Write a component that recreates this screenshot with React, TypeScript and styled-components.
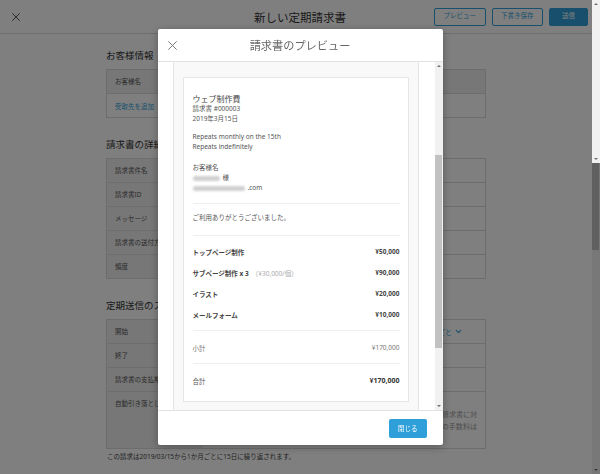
import React from "react";
import styled, { createGlobalStyle } from "styled-components";
import { ChevronDown } from "lucide-react";

const GlobalStyle = createGlobalStyle`
  html, body {
    margin: 0;
    padding: 0;
    height: 100%;
    overflow: hidden;
  }
  body {
    font-family: "Noto Sans", "Noto Sans CJK JP", sans-serif;
    color: #333;
    background: #fff;
  }
  #root {
    height: 100%;
  }
`;

const items = [
  { name: "トップページ制作", note: "", amount: "¥50,000" },
  { name: "サブページ制作 x 3", note: "（¥30,000/個）", amount: "¥90,000" },
  { name: "イラスト", note: "", amount: "¥20,000" },
  { name: "メールフォーム", note: "", amount: "¥10,000" },
];

const CrossIcon = ({ size, color }: { size: number; color: string }) => (
  <svg width={size} height={size} viewBox="0 0 10 10" fill="none">
    <path
      d="M0.7 0.7 9.3 9.3 M9.3 0.7 0.7 9.3"
      stroke={color}
      strokeWidth={1.1}
      strokeLinecap="round"
    />
  </svg>
);

const App = () => {
  return (
    <>
      <GlobalStyle />
      <Page>
        <Main>
          <Header>
            <CrossIcon size={8} color="#444" />
            <PageTitle>新しい定期請求書</PageTitle>
            <HeaderActions>
              <HeaderButton>プレビュー</HeaderButton>
              <HeaderButton>下書き保存</HeaderButton>
              <HeaderButton $primary>送信</HeaderButton>
            </HeaderActions>
          </Header>

          <Content>
            <Section>
              <SectionTitle>お客様情報</SectionTitle>
              <Table>
                <Row $full>
                  <LabelCell>お客様名</LabelCell>
                </Row>
                <Row $full>
                  <LinkCell>受取先を追加</LinkCell>
                </Row>
              </Table>
            </Section>

            <Section>
              <SectionTitle>請求書の詳細</SectionTitle>
              <Table>
                <Row>
                  <LabelCell>請求書件名</LabelCell>
                  <ValueCell />
                </Row>
                <Row>
                  <LabelCell>請求書ID</LabelCell>
                  <ValueCell />
                </Row>
                <Row>
                  <LabelCell>メッセージ</LabelCell>
                  <ValueCell />
                </Row>
                <Row>
                  <LabelCell>請求書の送付方法</LabelCell>
                  <ValueCell />
                </Row>
                <Row>
                  <LabelCell>頻度</LabelCell>
                  <ValueCell />
                </Row>
              </Table>
            </Section>

            <Section>
              <SectionTitle>定期送信のスケジュール</SectionTitle>
              <Table>
                <Row>
                  <LabelCell>開始</LabelCell>
                  <ValueCell $spread>
                    <span />
                    <SelectLink>
                      1か月ごと
                      <ChevronDown size={9} strokeWidth={3} />
                    </SelectLink>
                  </ValueCell>
                </Row>
                <Row>
                  <LabelCell>終了</LabelCell>
                  <ValueCell />
                </Row>
                <Row>
                  <LabelCell>請求書の支払期限</LabelCell>
                  <ValueCell />
                </Row>
                <Row $tall>
                  <LabelCell $top>自動引き落とし設定</LabelCell>
                  <DebitValue>
                    <JustifiedLine>
                      自動引き落としを有効にすると、お客様の登録済み口座から毎月この定期請求書に対
                    </JustifiedLine>
                    <JustifiedLine>
                      して自動的に決済が行われます。なお、決済ごとに発生する各カード決済の手数料は
                    </JustifiedLine>
                  </DebitValue>
                </Row>
              </Table>
              <Note>
                この請求は2019/03/15から1か月ごとに15日に繰り返されます。
              </Note>
            </Section>
          </Content>
        </Main>

        <Scrollbar>
          <ScrollArrow $dir="up" />
          <Thumb $offset={92} $length={150} />
          <ScrollArrow $dir="down" />
        </Scrollbar>
      </Page>

      <Overlay>
        <OverlayScrollbar>
          <ScrollArrow $dir="up" />
          <ScrollArrow $dir="down" />
        </OverlayScrollbar>

        <Modal>
          <ModalHeader>
            <CrossIcon size={9} color="#777" />
            <ModalTitle>請求書のプレビュー</ModalTitle>
            <span />
          </ModalHeader>

          <ModalBody>
            <ScrollArea>
              <Sheet>
                <InvoiceCard>
                  <CardBlock>
                    <InvoiceTitle>ウェブ制作費</InvoiceTitle>
                    <TextLine>請求書 #000003</TextLine>
                    <TextLine>2019年3月15日</TextLine>

                    <Group $gap={8}>
                      <TextLine>Repeats monthly on the 15th</TextLine>
                      <TextLine>Repeats indefinitely</TextLine>
                    </Group>

                    <Group $gap={11}>
                      <TextLine>お客様名</TextLine>
                      <TextLine>
                        <Redacted $w={27} />様
                      </TextLine>
                      <TextLine>
                        <Redacted $w={52} />.com
                      </TextLine>
                    </Group>
                  </CardBlock>

                  <MessageBlock>ご利用ありがとうございました。</MessageBlock>

                  <LinesBlock>
                    {items.map((item) => (
                      <ItemRow key={item.name}>
                        <ItemName>
                          {item.name}
                          {item.note && <ItemNote>{item.note}</ItemNote>}
                        </ItemName>
                        <Amount>{item.amount}</Amount>
                      </ItemRow>
                    ))}
                  </LinesBlock>

                  <LinesBlock $top={6}>
                    <ItemRow $muted>
                      <span>小計</span>
                      <span>¥170,000</span>
                    </ItemRow>
                  </LinesBlock>

                  <LinesBlock $top={6} $bottom={10}>
                    <ItemRow>
                      <span>合計</span>
                      <TotalAmount>¥170,000</TotalAmount>
                    </ItemRow>
                  </LinesBlock>
                </InvoiceCard>
              </Sheet>
            </ScrollArea>

            <Scrollbar>
              <ScrollArrow $dir="up" />
              <Thumb $offset={85} $length={193} />
              <ScrollArrow $dir="down" />
            </Scrollbar>
          </ModalBody>

          <ModalFooter>
            <CloseButton>閉じる</CloseButton>
          </ModalFooter>
        </Modal>
      </Overlay>
    </>
  );
};

/* page underneath */

const Page = styled.div`
  display: flex;
  height: 100vh;
`;

const Main = styled.div`
  flex: 1;
  min-width: 0;
  display: flex;
  flex-direction: column;
`;

const Header = styled.header`
  height: 34px;
  box-sizing: border-box;
  flex: none;
  display: grid;
  grid-template-columns: 1fr auto 1fr;
  align-items: center;
  padding: 0 4px 0 12px;
  border-bottom: 1px solid #dcdcdc;
`;

const PageTitle = styled.h1`
  margin: 0;
  font-size: 11.5px;
  font-weight: 400;
  color: #333;
`;

const HeaderActions = styled.div`
  justify-self: end;
  display: flex;
  gap: 6px;
`;

const HeaderButton = styled.button<{ $primary?: boolean }>`
  height: 18px;
  padding: 0 ${(p) => (p.$primary ? "12px" : "8.5px")};
  border: 1px solid #2e9fd9;
  border-radius: 2px;
  background: ${(p) => (p.$primary ? "#2e9fd9" : "#fff")};
  color: ${(p) => (p.$primary ? "#fff" : "#2e9fd9")};
  font-family: inherit;
  font-size: 6.5px;
  line-height: 1;
`;

const Content = styled.main`
  width: 380px;
  margin: 0 auto;
  padding-top: 15px;
`;

const Section = styled.section`
  & + & {
    margin-top: 20px;
  }
`;

const SectionTitle = styled.h2`
  margin: 0 0 6px;
  font-size: 9.5px;
  line-height: 14px;
  font-weight: 400;
  color: #333;
`;

const Table = styled.div`
  border: 1px solid #dadada;
  background: #fff;
`;

const Row = styled.div<{ $full?: boolean; $tall?: boolean }>`
  display: grid;
  grid-template-columns: ${(p) => (p.$full ? "1fr" : "95px 1fr")};
  min-height: ${(p) => (p.$tall ? "56px" : "23px")};

  & + & {
    border-top: 1px solid #dadada;
  }
`;

const LabelCell = styled.div<{ $top?: boolean }>`
  display: flex;
  align-items: ${(p) => (p.$top ? "flex-start" : "center")};
  padding: ${(p) => (p.$top ? "7px 8px 0" : "0 8px")};
  background: #eee;
  font-size: 6.5px;
  line-height: 10px;
  color: #555;
  white-space: nowrap;
  overflow: hidden;
`;

const LinkCell = styled.div`
  display: flex;
  align-items: center;
  padding: 0 8px;
  font-size: 6.5px;
  color: #2e9fd9;
`;

const ValueCell = styled.div<{ $spread?: boolean }>`
  display: flex;
  align-items: center;
  justify-content: ${(p) => (p.$spread ? "space-between" : "flex-start")};
  padding: ${(p) => (p.$spread ? "0 22px 0 8px" : "0 8px")};
  font-size: 6.5px;
  color: #555;
`;

const SelectLink = styled.span`
  display: flex;
  align-items: center;
  gap: 2px;
  font-size: 7px;
  color: #2e9fd9;
`;

const DebitValue = styled.div`
  padding: 17px 8px 5px;
  font-size: 7px;
  line-height: 12px;
  color: #999;
  overflow: hidden;
`;

const JustifiedLine = styled.div`
  text-align: justify;
  text-align-last: justify;
  white-space: nowrap;
`;

const Note = styled.p`
  margin: 3px 0 0 1px;
  font-size: 6.5px;
  line-height: 10px;
  color: #444;
`;

/* scrollbars */

const Scrollbar = styled.div`
  flex: none;
  width: 8px;
  display: flex;
  flex-direction: column;
  background: #f1f1f1;
`;

const OverlayScrollbar = styled(Scrollbar)`
  position: absolute;
  top: 0;
  right: 0;
  height: 163px;
  justify-content: space-between;
`;

const ScrollArrow = styled.div<{ $dir: "up" | "down" }>`
  flex: none;
  height: 8px;
  display: flex;
  align-items: center;
  justify-content: center;
  margin-top: ${(p) => (p.$dir === "down" ? "auto" : "0")};

  &::before {
    content: "";
    border-left: 2px solid transparent;
    border-right: 2px solid transparent;
    ${(p) =>
      p.$dir === "up"
        ? "border-bottom: 2.5px solid #6e6e6e;"
        : "border-top: 2.5px solid #6e6e6e;"}
  }
`;

const Thumb = styled.div<{ $offset: number; $length: number }>`
  flex: none;
  margin: ${(p) => p.$offset}px 1px 0 0;
  height: ${(p) => p.$length}px;
  background: #c1c1c1;
`;

/* modal */

const Overlay = styled.div`
  position: fixed;
  inset: 0;
  display: flex;
  align-items: center;
  justify-content: center;
  background: rgba(0, 0, 0, 0.5);
`;

const Modal = styled.div`
  width: 285px;
  height: 416px;
  display: flex;
  flex-direction: column;
  background: #fff;
  border-radius: 2px;
  box-shadow: 0 2px 8px rgba(0, 0, 0, 0.3);
  overflow: hidden;
`;

const ModalHeader = styled.div`
  flex: none;
  height: 33px;
  box-sizing: border-box;
  display: grid;
  grid-template-columns: 1fr auto 1fr;
  align-items: center;
  padding: 0 10px;
  border-bottom: 1px solid #e2e2e2;
`;

const ModalTitle = styled.h2`
  margin: 0;
  font-size: 11.2px;
  font-weight: 400;
  color: #666;
`;

const ModalBody = styled.div`
  flex: 1;
  min-height: 0;
  display: flex;
`;

const ScrollArea = styled.div`
  flex: 1;
  overflow: hidden;
  padding: 0 16px 0 15px;
`;

const Sheet = styled.div`
  margin-top: -10px;
  padding: 24px 9px 20px;
  border: 1px solid #e4e4e4;
  background: #f9f9f9;
`;

const InvoiceCard = styled.div`
  padding: 16px 8px 0 9px;
  border: 1px solid #e6e6e6;
  background: #fff;
  color: #555;
`;

const CardBlock = styled.div`
  padding-bottom: 10px;
`;

const InvoiceTitle = styled.div`
  font-size: 8px;
  line-height: 10px;
  color: #444;
`;

const TextLine = styled.div`
  font-size: 6.5px;
  line-height: 10px;
  white-space: nowrap;
`;

const Group = styled.div<{ $gap: number }>`
  margin-top: ${(p) => p.$gap}px;
`;

const Redacted = styled.span<{ $w: number }>`
  display: inline-block;
  width: ${(p) => p.$w}px;
  height: 5px;
  margin-right: 3px;
  border-radius: 3px;
  background: #d0d0d0;
  filter: blur(1.2px);
  vertical-align: middle;
`;

const MessageBlock = styled.div`
  padding: 9px 0 12px;
  border-top: 1px solid #eee;
  font-size: 6.5px;
  line-height: 10px;
`;

const LinesBlock = styled.div<{ $top?: number; $bottom?: number }>`
  padding: ${(p) => p.$top ?? 5}px 0 ${(p) => p.$bottom ?? 5}px;
  border-top: 1px solid #eee;
`;

const ItemRow = styled.div<{ $muted?: boolean }>`
  height: 21px;
  display: flex;
  align-items: center;
  justify-content: space-between;
  font-size: 6.5px;
  color: ${(p) => (p.$muted ? "#777" : "#555")};
`;

const ItemName = styled.span`
  font-weight: 700;
  color: #444;
`;

const ItemNote = styled.span`
  margin-left: 3px;
  font-weight: 400;
  color: #aaa;
`;

const Amount = styled.span`
  font-weight: 700;
  color: #444;
`;

const TotalAmount = styled.span`
  font-size: 7px;
  font-weight: 700;
  color: #333;
`;

const ModalFooter = styled.div`
  flex: none;
  height: 35px;
  box-sizing: border-box;
  display: flex;
  align-items: center;
  justify-content: flex-end;
  padding: 0 16px;
  border-top: 1px solid #e2e2e2;
`;

const CloseButton = styled.button`
  height: 19px;
  padding: 0 9px;
  border: none;
  border-radius: 2px;
  background: #2e9fd9;
  color: #fff;
  font-family: inherit;
  font-size: 6.5px;
`;

export default App;
